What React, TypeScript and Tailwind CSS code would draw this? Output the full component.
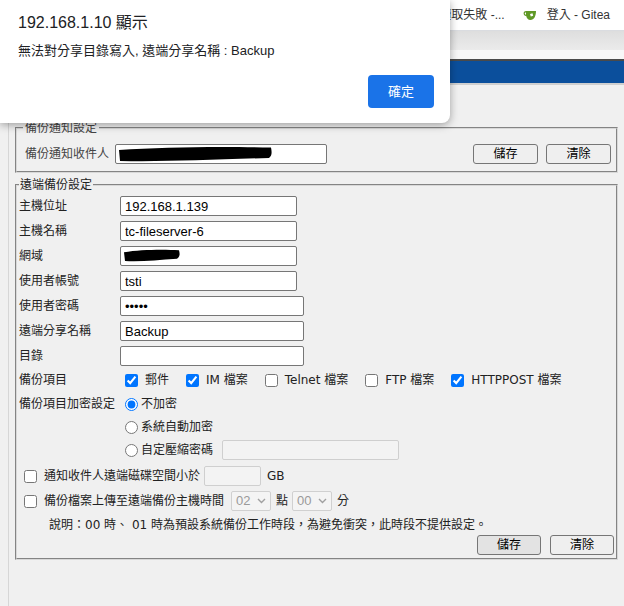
import React from 'react'

const font = "font-['DejaVu_Sans','Noto_Sans_CJK_TC',sans-serif]"

function Redact({ w, h }: { w: number; h: number }) {
  return (
    <svg width={w} height={h} viewBox={`0 0 ${w} ${h}`} className="block">
      <path
        d={`M1 ${h * 0.25} C ${w * 0.3} ${h * 0.05}, ${w * 0.7} ${h * 0.02}, ${w - 1} ${h * 0.1} C ${w} ${h * 0.4}, ${w} ${h * 0.6}, ${w - 3} ${h * 0.75} C ${w * 0.6} ${h * 0.85}, ${w * 0.3} ${h}, 2 ${h - 1} Z`}
        fill="#000"
      />
    </svg>
  )
}

function TextBox({ value, w, type = 'text' }: { value?: string; w: number; type?: string }) {
  return (
    <input
      type={type}
      defaultValue={value}
      readOnly
      style={{ width: w }}
      className="h-[20px] border border-[#767676] rounded-[2px] bg-white px-[4px] text-[13px] text-black outline-none font-['Liberation_Sans',sans-serif]"
    />
  )
}

function Btn({ label, active, wide }: { label: string; active?: boolean; wide?: boolean }) {
  return (
    <button
      className={
        'h-[20px] border border-[#767676] rounded-[3px] text-[12px] text-black flex items-center justify-center ' +
        (wide ? 'w-[65px] ' : 'w-[64px] ') +
        (active ? 'bg-[#e3e3e3]' : 'bg-[#efefef]')
      }
    >
      {label}
    </button>
  )
}

function Check({ label, checked }: { label: string; checked?: boolean }) {
  return (
    <label className="flex items-center gap-[7px]">
      <input type="checkbox" defaultChecked={checked} className="w-[13px] h-[13px] accent-[#0075ff]" />
      <span>{label}</span>
    </label>
  )
}

function Radio({ label, checked }: { label: string; checked?: boolean }) {
  return (
    <label className="flex items-center gap-[3px]">
      <input type="radio" name="enc" defaultChecked={checked} className="w-[13px] h-[13px] accent-[#0075ff]" />
      <span>{label}</span>
    </label>
  )
}

function FakeSelect({ value }: { value: string }) {
  return (
    <div className="w-[40px] h-[20px] border border-[#d0d0d0] rounded-[2px] bg-[#f4f4f4] flex items-center justify-between pl-[4px] pr-[4px] text-[13px] text-[#9a9a9a] font-['Liberation_Sans',sans-serif]">
      <span>{value}</span>
      <svg width="9" height="6" viewBox="0 0 9 6">
        <path d="M1 1 L4.5 4.5 L8 1" stroke="#a0a0a0" strokeWidth="1.4" fill="none" />
      </svg>
    </div>
  )
}

function Row({ label, children }: { label: string; children: React.ReactNode }) {
  return (
    <div className="flex items-center h-[20px]">
      <span className="w-[101px] shrink-0">{label}</span>
      {children}
    </div>
  )
}

export default function App() {
  return (
    <div className={`relative w-[624px] h-[606px] overflow-hidden bg-[#f0f0f0] ${font} text-[12px] text-[#222]`}>
      {/* bookmarks bar */}
      <div className="h-[31px] bg-white border-b border-[#dadce0] flex items-center justify-end pr-[14px] text-[12px] text-[#333] font-['Liberation_Sans','Noto_Sans_CJK_TC',sans-serif]">
        <span>讀取失敗 -...</span>
        <svg width="15" height="11" viewBox="0 0 15 11" className="ml-[18px]">
          <path d="M3 1 H13 C13 6 11 10 7.5 10 C5 10 3.6 8 3.2 6 C1.2 6 0.5 4.5 0.6 3 C0.7 1.8 1.8 1 3 1 Z M3 2.4 C2 2.4 1.7 3 1.8 3.6 C1.9 4.4 2.4 4.8 3 4.8 Z" fill="#609926" />
          <path d="M7 4 L9.5 3.2 L10.2 5.8 L7.8 6.6 Z" fill="#fff" />
        </svg>
        <span className="ml-[9px]">登入 - Gitea</span>
      </div>
      <div className="h-[19px] bg-gradient-to-b from-[#dedede] to-[#ebebeb]" />
      <div className="h-[9px] bg-[#f7f7f7]" />
      <div className="h-[2px] bg-[#4a4a4a]" />
      <div className="h-[22px] bg-[#0b4f9c]" />
      <div className="h-[2px] bg-[#cfcfcf]" />

      {/* page */}
      <div className="flex h-full">
        <div className="w-[9px] shrink-0 border-r border-[#d6d6d6] bg-[#f0f0f0]" />
        <div className="flex-1 pl-[6px] pr-[6px]">
          <fieldset className="mt-[35px] border-2 [border-style:groove] border-[#d8d8d8] pl-[8px] pr-[5px] pt-[8px] pb-[7px]">
            <legend className="h-[16px] leading-[16px] text-[12px] px-[2px] -ml-[2px] text-[#444]">備份通知設定</legend>
            <div className="flex items-center h-[20px]">
              <span className="w-[90px] shrink-0 text-[#444]">備份通知收件人</span>
              <div className="relative">
                <TextBox w={212} />
                <div className="absolute left-[3px] top-[2px]">
                  <Redact w={154} h={16} />
                </div>
              </div>
              <div className="ml-auto flex gap-[8px]">
                <Btn label="儲存" wide />
                <Btn label="清除" wide />
              </div>
            </div>
          </fieldset>

          <fieldset className="mt-[4px] border-2 [border-style:groove] border-[#d8d8d8] pl-[2px] pr-[2px] pt-[3px] pb-[3px]">
            <legend className="h-[16px] leading-[16px] text-[12px] px-[1px]">遠端備份設定</legend>
            <div className="flex flex-col gap-[5px]">
              <Row label="主機位址"><TextBox w={177} value="192.168.1.139" /></Row>
              <Row label="主機名稱"><TextBox w={177} value="tc-fileserver-6" /></Row>
              <Row label="網域">
                <div className="relative">
                  <TextBox w={177} />
                  <div className="absolute left-[3px] top-[3px]">
                    <Redact w={57} h={13} />
                  </div>
                </div>
              </Row>
              <Row label="使用者帳號"><TextBox w={177} value="tsti" /></Row>
              <Row label="使用者密碼"><TextBox w={184} type="password" value="12345" /></Row>
              <Row label="遠端分享名稱"><TextBox w={184} value="Backup" /></Row>
              <Row label="目錄"><TextBox w={184} /></Row>
            </div>

            <div className="mt-[4px] flex items-center h-[20px]">
              <span className="w-[106px] shrink-0">備份項目</span>
              <div className="flex items-center gap-[17px]">
                <Check label="郵件" checked />
                <Check label="IM 檔案" checked />
                <Check label="Telnet 檔案" />
                <Check label="FTP 檔案" />
                <Check label="HTTPPOST 檔案" checked />
              </div>
            </div>

            <div className="mt-[4px] flex">
              <span className="w-[106px] shrink-0 h-[20px] leading-[20px]">備份項目加密設定</span>
              <div className="flex flex-col gap-[3px]">
                <div className="h-[20px] flex items-center"><Radio label="不加密" checked /></div>
                <div className="h-[20px] flex items-center"><Radio label="系統自動加密" /></div>
                <div className="h-[20px] flex items-center">
                  <Radio label="自定壓縮密碼" />
                  <input
                    disabled
                    className="ml-[9px] w-[177px] h-[20px] border border-[#cfcfcf] rounded-[2px] bg-[#f3f3f3]"
                  />
                </div>
              </div>
            </div>

            <div className="mt-[6px] pl-[5px] flex items-center h-[20px]">
              <Check label="通知收件人遠端磁碟空間小於" />
              <input
                disabled
                className="ml-[4px] w-[57px] h-[20px] border border-[#cfcfcf] rounded-[2px] bg-[#f3f3f3]"
              />
              <span className="ml-[6px]">GB</span>
            </div>

            <div className="mt-[5px] pl-[5px] flex items-center h-[20px]">
              <Check label="備份檔案上傳至遠端備份主機時間" />
              <div className="ml-[7px]"><FakeSelect value="02" /></div>
              <span className="ml-[5px]">點</span>
              <div className="ml-[4px]"><FakeSelect value="00" /></div>
              <span className="ml-[5px]">分</span>
            </div>

            <div className="mt-[6px] pl-[30px] h-[16px] leading-[16px]">
              說明：00 時、 01 時為預設系統備份工作時段，為避免衝突，此時段不提供設定。
            </div>

            <div className="mt-[2px] flex justify-end gap-[9px]">
              <Btn label="儲存" active />
              <Btn label="清除" />
            </div>
          </fieldset>
        </div>
      </div>

      {/* alert dialog */}
      <div className="absolute left-0 top-0 w-[450px] h-[123px] bg-white rounded-br-[8px] shadow-[0_2px_8px_rgba(0,0,0,0.35)] pl-[18px] pr-[16px] pt-[13px] font-['Liberation_Sans','Noto_Sans_CJK_TC',sans-serif]">
        <div className="text-[16px] leading-[20px] text-[#202124]">192.168.1.10 顯示</div>
        <div className="mt-[9px] text-[13px] leading-[18px] text-[#202124]">無法對分享目錄寫入, 遠端分享名稱 : Backup</div>
        <div className="mt-[15px] flex justify-end">
          <button className="w-[66px] h-[33px] rounded-[4px] bg-[#1a73e8] text-white text-[13px]">確定</button>
        </div>
      </div>
    </div>
  )
}
